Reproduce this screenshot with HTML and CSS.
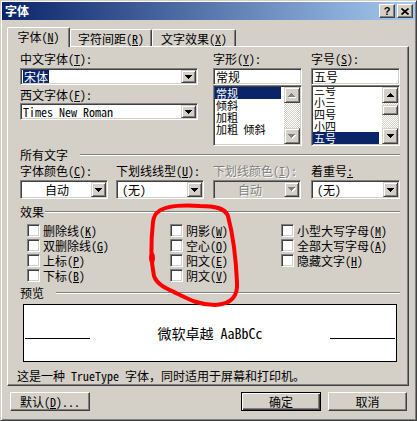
FILE: index.html
```html
<!DOCTYPE html>
<html lang="zh-CN">
<head>
  <meta charset="UTF-8">
  <title>字体</title>
  <link rel="stylesheet" href="styles.css">
</head>
<body>
  <svg class="defs" width="0" height="0">
    <defs>
      <path id="dn" d="M0 0h7v1h-1v1h-1v1h-1v1h-1v-1h-1v-1h-1v-1h-1z"/>
      <path id="up" d="M3 0h1v1h1v1h1v1h1v1h-7v-1h1v-1h1v-1h1z"/>
    </defs>
  </svg>

  <div class="window">
    <div class="titlebar">
      <span class="title">字体</span>
      <div class="title-buttons">
        <span class="tbtn">?</span>
        <span class="tbtn">
          <svg width="8" height="7" viewBox="0 0 8 7"><path d="M0.5 0.5L7.5 6.5M7.5 0.5L0.5 6.5" stroke="#000" stroke-width="1.7"/></svg>
        </span>
      </div>
    </div>

    <div class="tabs">
      <div class="tab active tab-font">字体(<u>N</u>)</div>
      <div class="tab tab-spacing">字符间距(<u>R</u>)</div>
      <div class="tab tab-effects">文字效果(<u>X</u>)</div>
    </div>

    <div class="panel">
      <div class="top-row">
        <div class="col-font">
          <label class="lbl">中文字体(<u>T</u>):</label>
          <div class="combo sunken">
            <span class="combo-text"><span class="hl sel-text">宋体</span></span>
            <span class="drop raised"><svg width="7" height="4"><use href="#dn"/></svg></span>
          </div>
          <label class="lbl lbl-second">西文字体(<u>F</u>):</label>
          <div class="combo sunken">
            <span class="combo-text">Times New Roman</span>
            <span class="drop raised"><svg width="7" height="4"><use href="#dn"/></svg></span>
          </div>
        </div>

        <div class="col-list col-style">
          <label class="lbl">字形(<u>Y</u>):</label>
          <div class="edit sunken">常规</div>
          <div class="listbox sunken">
            <ul class="items">
              <li class="hl">常规</li>
              <li>倾斜</li>
              <li>加粗</li>
              <li>加粗 倾斜</li>
            </ul>
            <div class="vscroll">
              <span class="sbtn raised"><svg width="8" height="5"><use href="#up" x="1" y="1" fill="#fff"/><use href="#up" fill="#808080"/></svg></span>
              <span class="track"></span>
              <span class="sbtn raised"><svg width="8" height="5"><use href="#dn" x="1" y="1" fill="#fff"/><use href="#dn" fill="#808080"/></svg></span>
            </div>
          </div>
        </div>

        <div class="col-list col-size">
          <label class="lbl">字号(<u>S</u>):</label>
          <div class="edit sunken">五号</div>
          <div class="listbox sunken">
            <ul class="items scrolled">
              <li>三号</li>
              <li>小三</li>
              <li>四号</li>
              <li>小四</li>
              <li class="hl">五号</li>
            </ul>
            <div class="vscroll">
              <span class="sbtn raised"><svg width="7" height="4"><use href="#up"/></svg></span>
              <span class="track"><span class="thumb raised"></span></span>
              <span class="sbtn raised"><svg width="7" height="4"><use href="#dn"/></svg></span>
            </div>
          </div>
        </div>
      </div>

      <div class="group group-all">
        <span>所有文字</span>
        <span class="group-line"></span>
      </div>
      <div class="four-cols labels-row">
        <label>字体颜色(<u>C</u>):</label>
        <label>下划线线型(<u>U</u>):</label>
        <label class="disabled-text">下划线颜色(<u>I</u>):</label>
        <label>着重号<u>:</u></label>
      </div>
      <div class="four-cols combos-row">
        <div class="combo tall sunken">
          <span class="combo-text center">自动</span>
          <span class="drop raised"><svg width="7" height="4"><use href="#dn"/></svg></span>
        </div>
        <div class="combo tall sunken">
          <span class="combo-text pad">(无)</span>
          <span class="drop raised"><svg width="7" height="4"><use href="#dn"/></svg></span>
        </div>
        <div class="combo tall sunken disabled">
          <span class="combo-text center disabled-text">自动</span>
          <span class="drop raised"><svg width="8" height="5"><use href="#dn" x="1" y="1" fill="#fff"/><use href="#dn" fill="#808080"/></svg></span>
        </div>
        <div class="combo tall sunken wide">
          <span class="combo-text pad">(无)</span>
          <span class="drop raised"><svg width="7" height="4"><use href="#dn"/></svg></span>
        </div>
      </div>

      <div class="group group-effects">
        <span>效果</span>
        <span class="group-line"></span>
      </div>
      <div class="checks">
        <div class="check-item"><span class="box sunken"></span>删除线(<u>K</u>)</div>
        <div class="check-item"><span class="box sunken"></span>双删除线(<u>G</u>)</div>
        <div class="check-item"><span class="box sunken"></span>上标(<u>P</u>)</div>
        <div class="check-item"><span class="box sunken"></span>下标(<u>B</u>)</div>
        <div class="check-item"><span class="box sunken"></span>阴影(<u>W</u>)</div>
        <div class="check-item"><span class="box sunken"></span>空心(<u>O</u>)</div>
        <div class="check-item"><span class="box sunken"></span>阳文(<u>E</u>)</div>
        <div class="check-item"><span class="box sunken"></span>阴文(<u>V</u>)</div>
        <div class="check-item"><span class="box sunken"></span>小型大写字母(<u>M</u>)</div>
        <div class="check-item"><span class="box sunken"></span>全部大写字母(<u>A</u>)</div>
        <div class="check-item"><span class="box sunken"></span>隐藏文字(<u>H</u>)</div>
      </div>

      <div class="group group-preview">
        <span>预览</span>
        <span class="group-line"></span>
      </div>
      <div class="preview">
        <span class="pline"></span>
        <span class="ptext">微软卓越 AaBbCc</span>
        <span class="pline"></span>
      </div>
      <div class="info">这是一种 TrueType 字体，同时适用于屏幕和打印机。</div>
    </div>

    <div class="buttons">
      <span class="btn">默认(<u>D</u>)...</span>
      <span class="btn btn-default btn-ok">确定</span>
      <span class="btn btn-cancel">取消</span>
    </div>
  </div>

  <!-- red marker circle drawn over the dialog -->
  <svg class="marker" width="417" height="421" viewBox="0 0 417 421">
    <path d="M158 212C166 205 185 205 200 206C215 206 225 208 228 216C233 235 236 260 237 282C238 296 232 304 215 305C200 305 190 300 178 294C168 289 157 285 154 276C151 262 151 240 153 222C154 216 156 213 158 212Z" fill="none" stroke="#f00" stroke-width="4" stroke-linejoin="round"/>
    <ellipse cx="152" cy="258" rx="3" ry="6" fill="#f00"/>
  </svg>
</body>
</html>
```

FILE: styles.css
```css
* {
  box-sizing: border-box;
}

body {
  margin: 0;
  position: relative;
  font-family: "Noto Sans Mono CJK SC", "Noto Sans CJK SC", sans-serif;
  font-size: 12px;
  color: #000;
  background: #d4d0c8;
}

u {
  text-underline-offset: 1px;
}

.defs {
  position: absolute;
}

.window {
  width: 417px;
  height: 421px;
  padding: 1px;
  background: #d4d0c8;
  border: 1px solid;
  border-color: #d4d0c8 #404040 #404040 #d4d0c8;
  box-shadow: inset 1px 1px #fff, inset -1px -1px #808080;
}

/* bevels */
.raised {
  background: #d4d0c8;
  border: 1px solid;
  border-color: #d4d0c8 #404040 #404040 #d4d0c8;
  box-shadow: inset 1px 1px #fff, inset -1px -1px #808080;
}

.sunken {
  background: #fff;
  border: 1px solid;
  border-color: #808080 #fff #fff #808080;
  box-shadow: inset 1px 1px #404040, inset -1px -1px #d4d0c8;
}

.hl {
  background: #0a246a;
  color: #fff;
}

.disabled-text {
  color: #808080;
  text-shadow: 1px 1px #fff;
}

/* title bar */
.titlebar {
  height: 18px;
  display: flex;
  align-items: center;
  justify-content: space-between;
  padding: 0 2px 0 3px;
  background: linear-gradient(to right, #0a246a, #a6caf0);
}

.title {
  color: #fff;
  font-family: "Noto Sans CJK SC", sans-serif;
  font-weight: bold;
  line-height: 18px;
}

.title-buttons {
  display: flex;
  gap: 2px;
}

.tbtn {
  width: 16px;
  height: 14px;
  display: flex;
  align-items: center;
  justify-content: center;
  background: #d4d0c8;
  border: 1px solid;
  border-color: #fff #404040 #404040 #fff;
  box-shadow: inset -1px -1px #808080;
  font-family: "Liberation Sans", sans-serif;
  font-weight: bold;
  font-size: 11px;
  line-height: 1;
}

/* tabs */
.tabs {
  display: flex;
  align-items: flex-end;
  height: 19px;
  margin: 7px 0 0 5px;
}

.tab {
  height: 17px;
  display: flex;
  align-items: center;
  justify-content: center;
  background: #d4d0c8;
  border-left: 1px solid #fff;
  border-top: 1px solid #fff;
  border-right: 1px solid #404040;
  box-shadow: inset -1px 0 #808080;
  border-radius: 2px 2px 0 0;
  white-space: nowrap;
}

.tab.active {
  height: 20px;
  margin-bottom: -1px;
  position: relative;
  z-index: 1;
  padding-bottom: 2px;
}

.tab-font {
  width: 63px;
}

.tab-spacing {
  width: 82px;
}

.tab-effects {
  width: 84px;
}

.panel {
  width: 402px;
  height: 340px;
  margin-left: 5px;
  padding: 5px 0 0 12px;
  border: 1px solid;
  border-color: #fff #404040 #404040 #fff;
  box-shadow: inset -1px -1px #808080;
}

/* top fields */
.top-row {
  display: flex;
  height: 94px;
}

.col-font {
  width: 178px;
}

.col-list {
  width: 89px;
}

.col-style {
  margin-left: 15px;
}

.col-size {
  margin-left: 9px;
}

.lbl {
  display: block;
  height: 14px;
  line-height: 14px;
  margin-bottom: 2px;
  white-space: nowrap;
}

.lbl-second {
  margin-top: 3px;
  margin-bottom: 1px;
}

.combo {
  display: flex;
  height: 17px;
  padding: 1px;
}

.combo.tall {
  height: 19px;
  width: 88px;
}

.combo.tall.wide {
  width: 89px;
}

.combo.disabled {
  background: #d4d0c8;
}

.combo-text {
  flex: 1;
  line-height: 13px;
  padding-left: 1px;
  white-space: nowrap;
  overflow: hidden;
}

.combo.tall .combo-text {
  line-height: 15px;
}

.combo-text.center {
  text-align: center;
}

.combo-text.pad {
  padding-left: 4px;
}

.sel-text {
  display: inline-block;
  line-height: 13px;
  padding: 0 1px;
}

.drop {
  width: 15px;
  display: flex;
  align-items: center;
  justify-content: center;
}

.drop svg,
.sbtn svg {
  display: block;
}

.edit {
  height: 17px;
  line-height: 13px;
  padding: 1px 2px;
  white-space: nowrap;
}

.listbox {
  height: 61px;
  display: flex;
  padding: 1px;
  overflow: hidden;
}

.items {
  flex: 1;
  list-style: none;
  margin: 0;
  padding: 0 3px 0 0;
  font-size: 11px;
  line-height: 12px;
  overflow: hidden;
}

.items li {
  height: 12px;
  padding-left: 1px;
  white-space: nowrap;
}

.items.scrolled li:first-child {
  margin-top: -3px;
}

.vscroll {
  width: 16px;
  display: flex;
  flex-direction: column;
}

.sbtn {
  height: 16px;
  display: flex;
  align-items: center;
  justify-content: center;
}

.track {
  flex: 1;
  padding-top: 2px;
  background: repeating-conic-gradient(#fff 0 25%, #d4d0c8 0 50%) 0 0 / 2px 2px;
}

.thumb {
  display: block;
  height: 10px;
}

/* sections */
.group {
  display: flex;
  align-items: center;
  height: 14px;
  line-height: 14px;
  white-space: nowrap;
}

.group-line {
  flex: 1;
  height: 2px;
  border-top: 1px solid #808080;
  border-bottom: 1px solid #fff;
  margin-right: 8px;
}

.group-all {
  margin-top: 2px;
}

.group-all .group-line {
  margin-left: 12px;
}

.group-effects {
  margin-top: 6px;
}

.group-effects .group-line {
  margin-left: 1px;
}

.group-preview {
  margin-top: 3px;
}

.group-preview .group-line {
  margin-left: 12px;
}

.four-cols {
  display: grid;
  grid-template-columns: 96px 97px 98px 89px;
}

.labels-row {
  margin-top: 2px;
  height: 14px;
  line-height: 14px;
  white-space: nowrap;
}

.combos-row {
  margin-top: 2px;
}

.checks {
  display: grid;
  grid-template-columns: 143px 111px 1fr;
  grid-template-rows: repeat(4, 15px);
  grid-auto-flow: column;
  margin-top: 4px;
  padding-left: 7px;
}

.check-item {
  display: flex;
  align-items: center;
  white-space: nowrap;
}

.box {
  width: 13px;
  height: 13px;
  margin-right: 3px;
}

.preview {
  width: 374px;
  height: 58px;
  margin: 4px 0 0 3px;
  padding: 0 1px;
  display: flex;
  align-items: center;
  background: #fff;
  border: 1px solid #000;
}

.pline {
  width: 65px;
  height: 1px;
  margin-top: 10px;
  background: #000;
}

.ptext {
  flex: 1;
  text-align: center;
  font-size: 14px;
  line-height: 16px;
  white-space: nowrap;
}

.info {
  height: 14px;
  line-height: 14px;
  margin: 7px 0 0 -3px;
  white-space: nowrap;
}

/* bottom buttons */
.buttons {
  display: flex;
  margin: 6px 0 0 8px;
}

.btn {
  width: 80px;
  height: 19px;
  display: flex;
  align-items: center;
  justify-content: center;
  background: #d4d0c8;
  border: 1px solid;
  border-color: #fff #404040 #404040 #fff;
  box-shadow: inset -1px -1px #808080;
  white-space: nowrap;
}

.btn-default {
  border: 1px solid #000;
  box-shadow: inset 1px 1px #fff, inset -1px -1px #404040, inset -2px -2px #808080;
}

.btn-ok {
  margin-left: 151px;
}

.btn-cancel {
  width: 79px;
  margin-left: 7px;
}

.marker {
  position: absolute;
  left: 0;
  top: 0;
  pointer-events: none;
}
```
